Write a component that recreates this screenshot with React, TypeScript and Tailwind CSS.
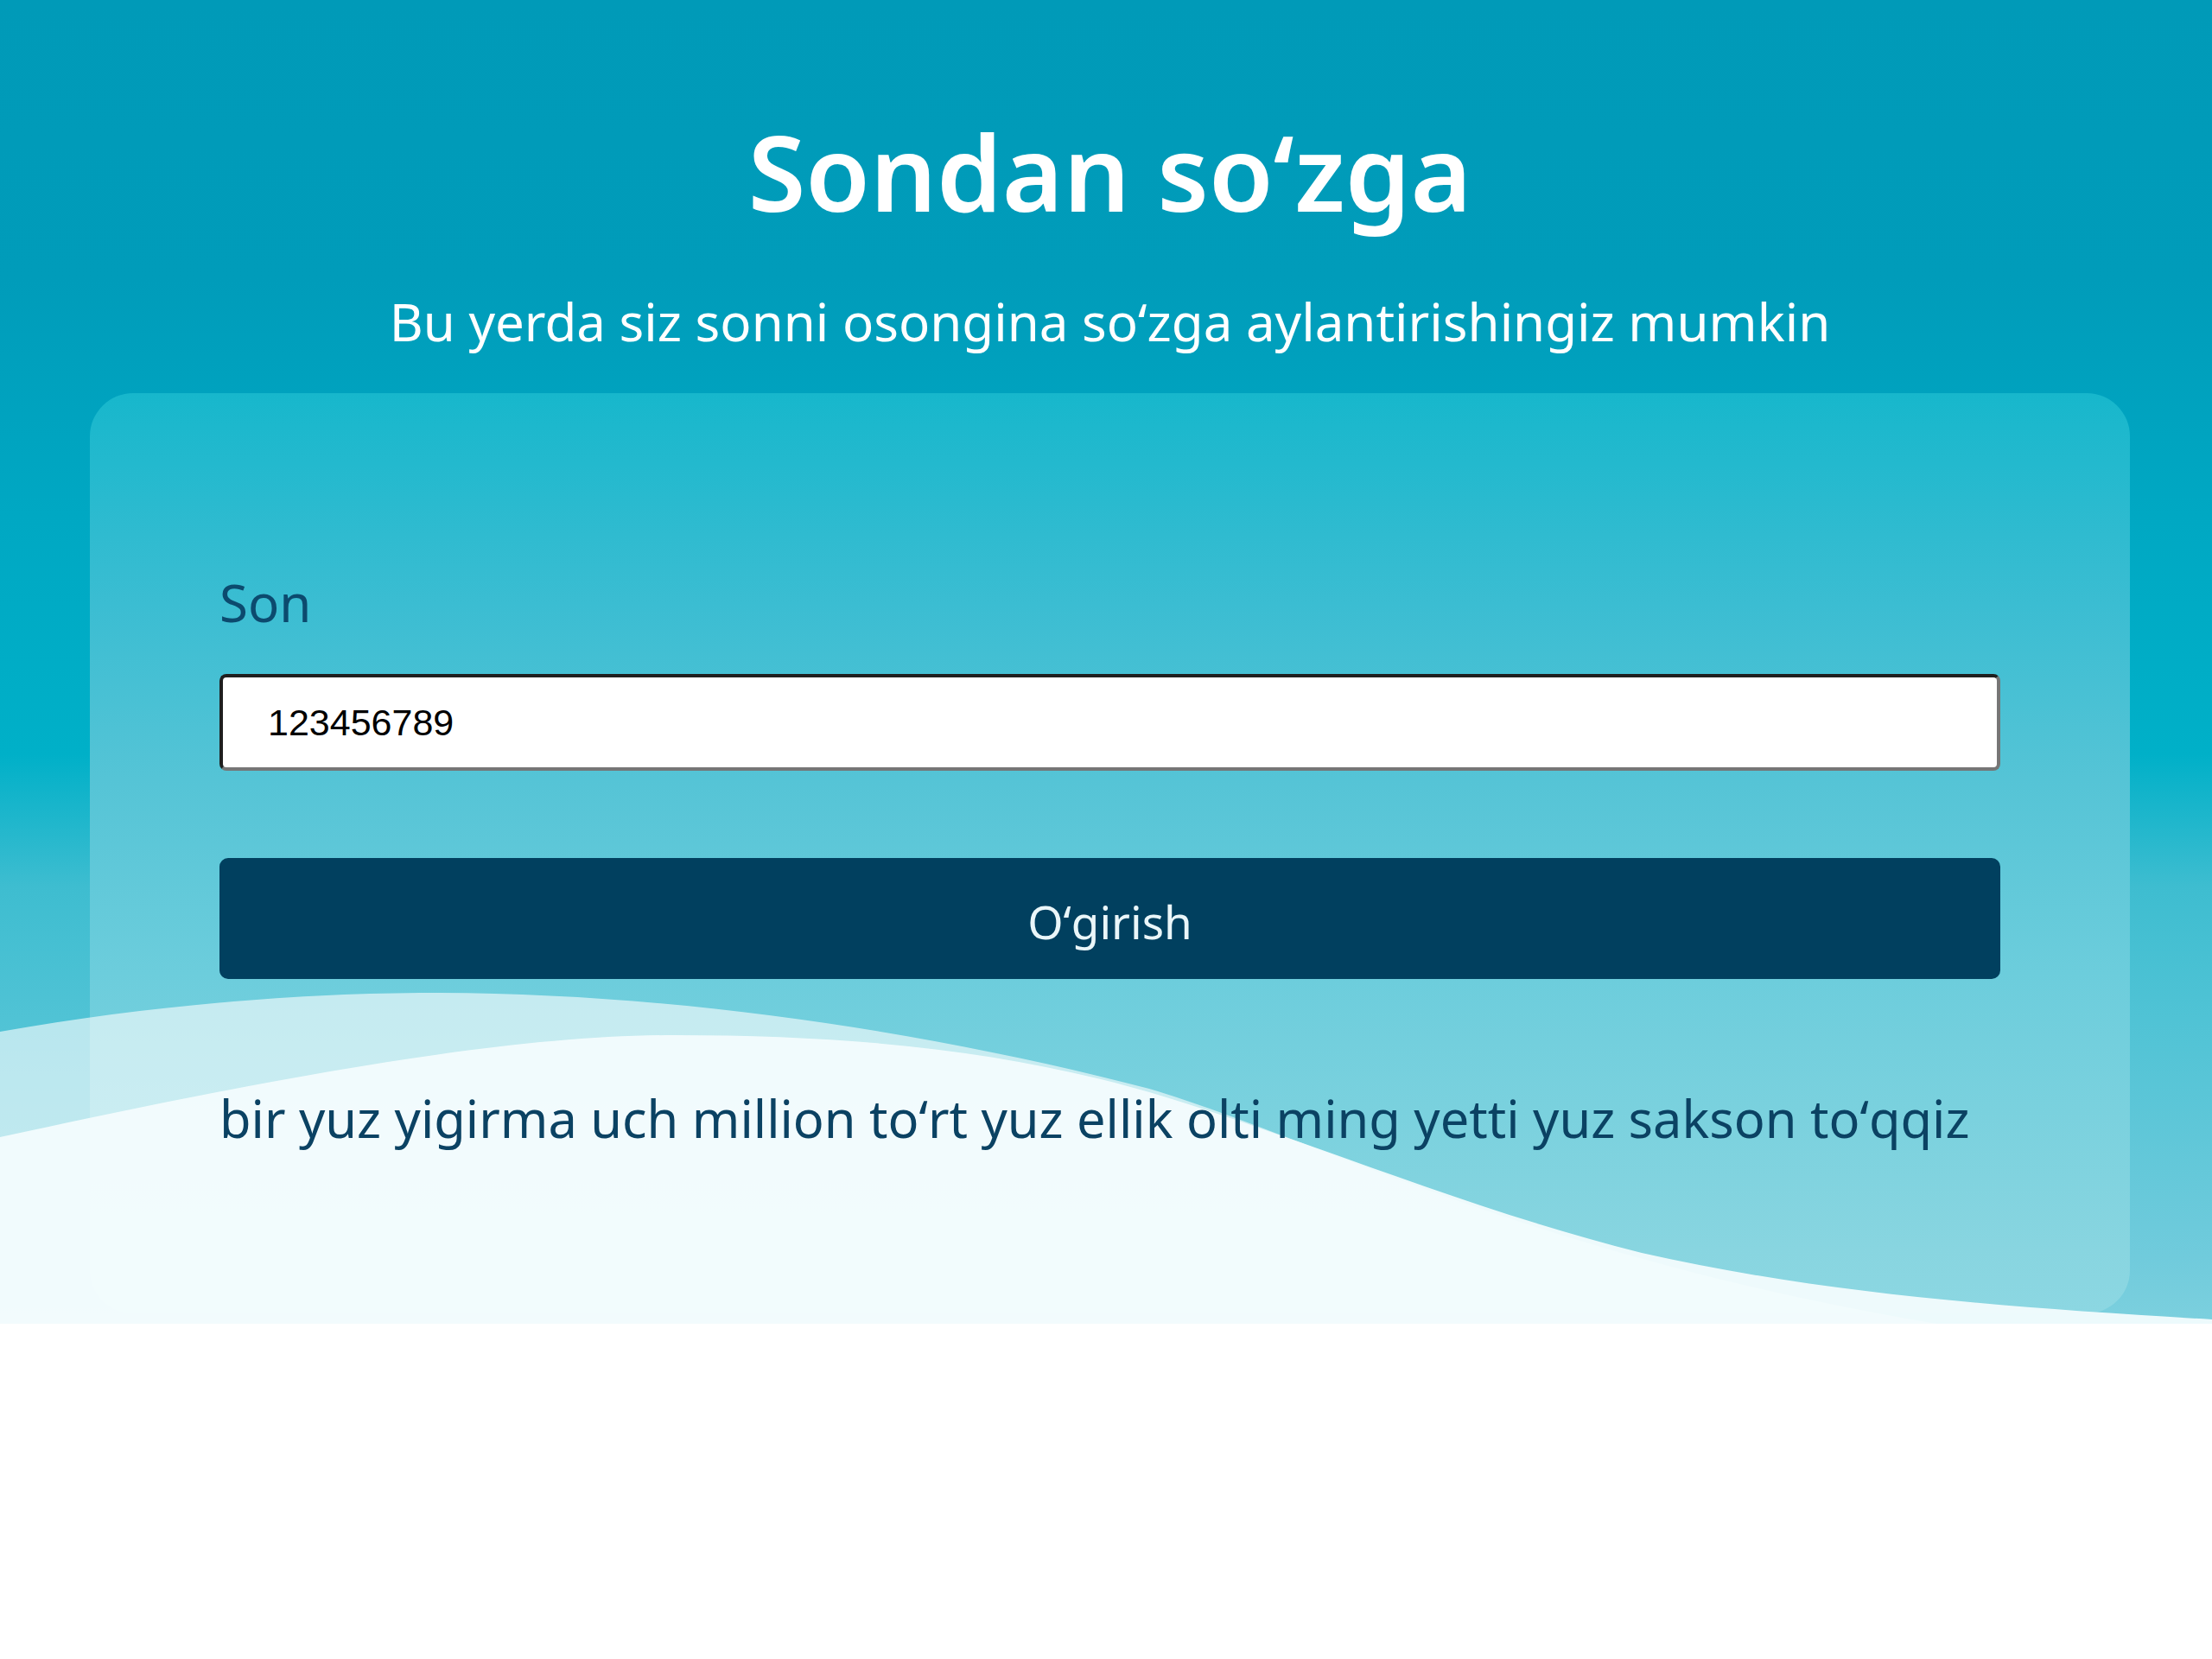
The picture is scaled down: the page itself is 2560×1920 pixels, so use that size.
import React, { useState } from 'react';

const ONES = ['', 'bir', 'ikki', 'uch', 'toʻrt', 'besh', 'olti', 'yetti', 'sakkiz', 'toʻqqiz'];
const TENS = ['', 'oʻn', 'yigirma', 'oʻttiz', 'qirq', 'ellik', 'oltmish', 'yetmish', 'sakson', 'toʻqson'];
const SCALES = ['', 'ming', 'million', 'milliard', 'trillion'];

function chunkToWords(n: number): string[] {
  const words: string[] = [];
  const h = Math.floor(n / 100);
  const t = Math.floor((n % 100) / 10);
  const o = n % 10;
  if (h) words.push(ONES[h], 'yuz');
  if (t) words.push(TENS[t]);
  if (o) words.push(ONES[o]);
  return words;
}

function toWords(input: string): string {
  const digits = input.replace(/\D/g, '');
  if (!digits) return '';
  let num = Number(digits);
  if (num === 0) return 'nol';
  const parts: string[] = [];
  let scale = 0;
  while (num > 0 && scale < SCALES.length) {
    const chunk = num % 1000;
    if (chunk) {
      parts.unshift([...chunkToWords(chunk), SCALES[scale]].filter(Boolean).join(' '));
    }
    num = Math.floor(num / 1000);
    scale++;
  }
  return parts.join(' ');
}

const Waves: React.FC = () => (
  <svg
    className="pointer-events-none absolute bottom-0 left-0 h-[432px] w-full"
    viewBox="0 0 2560 432"
    preserveAspectRatio="none"
  >
    <path
      d="M0 94 C180 62 360 49 500 49 C800 49 1100 100 1330 160 C1550 225 1900 420 2560 470 V432 H0 Z"
      fill="rgba(255,255,255,0.6)"
    />
    <path
      d="M0 216 C260 160 560 98 780 98 C1000 98 1180 118 1350 170 C1520 222 1700 300 1900 350 C2100 395 2300 412 2560 427 V432 H0 Z"
      fill="#f3fcfd"
      fillOpacity={0.95}
    />
  </svg>
);

const App: React.FC = () => {
  const [value, setValue] = useState('123456789');
  const [result, setResult] = useState(toWords('123456789'));

  return (
    <div className="min-h-screen bg-white font-['Noto_Sans',sans-serif]">
      <section className="relative overflow-hidden bg-[linear-gradient(180deg,#009ab8_0%,#009cba_21%,#00a8c3_39%,#00b0c8_57%,#3ebdd0_67%,#50c3d5_77%,#70cbdc_95%,#7cd0de_100%)] pl-[104px] pr-[95px] pt-[138px] pb-[12px]">
        <Waves />

        <h1 className="text-center text-[121px] font-semibold leading-none text-white">
          Sondan soʻzga
        </h1>
        <p className="mt-[83px] text-center text-[60px] leading-none text-white">
          Bu yerda siz sonni osongina soʻzga aylantirishingiz mumkin
        </p>

        <div className="mt-[53px] rounded-[50px] bg-[linear-gradient(180deg,#17b7cc_0%,#3bbdd2_23%,#55c4d6_42%,#6ccddc_63%,#88d5e0_93%,#8cd7e2_100%)] px-[150px] pt-[212px] pb-[196px]">
          <div className="relative z-10">
            <label htmlFor="son" className="block text-[60px] leading-none text-[#0c4a6e]">
              Son
            </label>
            <input
              id="son"
              type="text"
              value={value}
              onChange={e => setValue(e.target.value)}
              className="mt-[53px] block h-[112px] w-full rounded-[8px] border-4 border-t-[#1f1f1f] border-l-[#1f1f1f] border-r-[#767676] border-b-[#767676] bg-white pl-[52px] font-['Liberation_Sans',Arial,sans-serif] text-[43px] text-black outline-none"
            />
            <button
              type="button"
              onClick={() => setResult(toWords(value))}
              className="mt-[101px] flex h-[140px] w-full items-center justify-center rounded-[10px] bg-[#01405f] pt-[6px] text-[53px] leading-none text-[#eaf6f9]"
            >
              Oʻgirish
            </button>
            <p className="mt-[131px] text-[59.5px] leading-none whitespace-nowrap text-[#0b4263]">
              {result}
            </p>
          </div>
        </div>
      </section>
    </div>
  );
};

export default App;
